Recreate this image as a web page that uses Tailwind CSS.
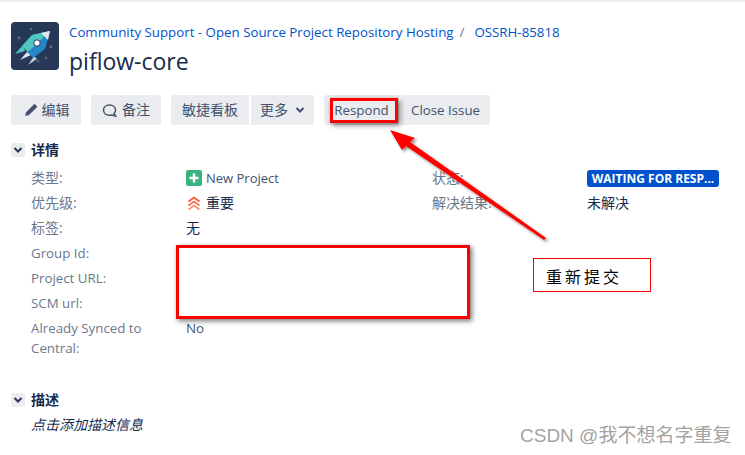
<!DOCTYPE html>
<html>
<head>
<meta charset="utf-8">
<script src="https://cdn.jsdelivr.net/npm/@tailwindcss/browser@4"></script>
</head>
<body class="bg-white">
<div class="relative w-[745px] h-[455px] overflow-hidden bg-white text-[13.3px] leading-[20px] text-[#172b4d] font-['Open_Sans','Noto_Sans_CJK_SC',sans-serif]">
  <div class="h-[2px] bg-[#ebecf0]"></div>

  <header class="flex pl-[11px] pt-[20px] gap-[10px] h-[93px]">
    <svg class="w-[48px] h-[48px] shrink-0" viewBox="0 0 48 48">
      <rect width="48" height="48" rx="4" fill="#253858"/>
      <circle cx="8" cy="16" r="1.4" fill="#5e6c84"/><circle cx="20" cy="7" r="1.2" fill="#5e6c84"/><circle cx="40" cy="25" r="1.4" fill="#5e6c84"/><circle cx="27" cy="39" r="1.3" fill="#5e6c84"/><circle cx="35" cy="36" r="1.3" fill="#5e6c84"/>
      <path d="M12 23 L4 32 L14 29 Z" fill="#4dc5c0"/>
      <path d="M16 30 L9 38 L20 33 Z" fill="#dfe6ee"/>
      <path d="M23 34 L17 43 L26 37 Z" fill="#b9c8da"/>
      <path d="M39 9 L21 13 L11 24 L22 36 L34 27 Z" fill="#2684c8"/>
      <path d="M39 9 L21 13 L11 24 L17 30 Z" fill="#4dc5c0"/>
      <path d="M39 9 L30 11 L37 18 Z" fill="#dfe6ee"/>
      <circle cx="26" cy="21" r="3.2" fill="#fff" stroke="#253858" stroke-width="1"/>
    </svg>
    <div class="min-w-0">
      <div class="flex h-[20px] text-[#0052cc] whitespace-nowrap">
        <span>Community Support - Open Source Project Repository Hosting</span>
        <span class="ml-[6px] text-[#6b778c]">/</span>
        <span class="ml-[10px]">OSSRH-85818</span>
      </div>
      <h1 class="mt-[2px] text-[23px] leading-[34px] font-medium">piflow-core</h1>
    </div>
  </header>

  <div class="flex items-stretch h-[30px] pl-[11px] text-[#42526e]">
    <div class="flex items-center justify-center gap-[3px] w-[70px] rounded-[3px] bg-[#ebecf0] text-[14px]">
      <svg class="w-[16px] h-[16px]" viewBox="0 0 16 16"><path d="M11.5 1.8 L14.4 4.7 L6 13 L2.2 14 L3.1 10.2 Z" fill="#42526e"/></svg>
      <span>编辑</span>
    </div>
    <div class="flex items-center justify-center gap-[5px] w-[70px] ml-[10px] rounded-[3px] bg-[#ebecf0] text-[14px]">
      <svg class="w-[15px] h-[15px]" viewBox="0 0 15 15"><path d="M7.5 2 C11 2 13.5 4.200 13.500 7 C13.500 8.500 13 9.600 12 10.500 L13.500 13 L9.800 12 C9 12.200 8.300 12.300 7.500 12.300 C4 12.300 1.500 10 1.500 7 C1.500 4.200 4 2 7.500 2 Z" fill="none" stroke="#42526e" stroke-width="1.500"/></svg>
      <span>备注</span>
    </div>
    <div class="flex items-center justify-center w-[78px] ml-[10px] rounded-l-[3px] bg-[#ebecf0] text-[14px]">敏捷看板</div>
    <div class="flex items-center justify-center gap-[7px] w-[63px] ml-[2px] rounded-r-[3px] bg-[#ebecf0] text-[14px]">
      <span>更多</span>
      <svg class="w-[10px] h-[8px]" viewBox="0 0 10 8"><path d="M1.500 2 L5 5.500 L8.500 2" fill="none" stroke="#42526e" stroke-width="2"/></svg>
    </div>
    <div class="flex items-center justify-center w-[75px] ml-[10px] rounded-l-[3px] bg-[#ebecf0]">Respond</div>
    <div class="flex items-center justify-center w-[89px] ml-[2px] rounded-r-[3px] bg-[#ebecf0]">Close Issue</div>
  </div>

  <section class="mt-[15px]">
    <div class="flex items-center h-[20px] pl-[11px] gap-[6px]">
      <span class="flex items-center justify-center w-[14px] h-[14px] rounded-[2px] bg-[#ebecf0]">
        <svg class="w-[10px] h-[8px]" viewBox="0 0 10 8"><path d="M1.500 2 L5 5.500 L8.500 2" fill="none" stroke="#253858" stroke-width="2"/></svg>
      </span>
      <h2 class="text-[14px] font-semibold">详情</h2>
    </div>
    <div class="mt-[5px] pl-[31px] grid grid-cols-[155px_246px_155px_1fr] auto-rows-[25px] text-[14px]">
      <div class="pt-[3px] text-[#6b778c]">类型:</div>
      <div class="flex items-center gap-[4px]">
        <svg class="w-[16px] h-[16px]" viewBox="0 0 16 16"><rect width="16" height="16" rx="2" fill="#36b37e"/><path d="M8 3.500 V12.500 M3.500 8 H12.500" stroke="#fff" stroke-width="2.400"/></svg>
        <span class="text-[#42526e] text-[13px]">New Project</span>
      </div>
      <div class="pt-[3px] text-[#6b778c]">状态:</div>
      <div class="pt-[5px]"><div class="w-[132px] h-[17px] rounded-[3px] bg-[#0052cc] text-white text-[12px] leading-[17px] font-bold text-center whitespace-nowrap">WAITING FOR RESP...</div></div>

      <div class="pt-[3px] text-[#6b778c]">优先级:</div>
      <div class="flex items-center gap-[4px]">
        <svg class="w-[16px] h-[16px]" viewBox="0 0 16 16"><path d="M2.500 6.500 L8 2.500 L13.500 6.500" fill="none" stroke="#ff5630" stroke-width="1.800"/><path d="M2.500 10.500 L8 6.500 L13.500 10.500" fill="none" stroke="#ff7452" stroke-width="1.800"/><path d="M2.500 14.500 L8 10.500 L13.500 14.500" fill="none" stroke="#ff8f73" stroke-width="1.800"/></svg>
        <span>重要</span>
      </div>
      <div class="pt-[3px] text-[#6b778c]">解决结果:</div>
      <div class="pt-[3px]">未解决</div>

      <div class="col-start-1 pt-[3px] text-[#6b778c]">标签:</div>
      <div class="pt-[3px]">无</div>
      <div class="col-start-1 pt-[3px] text-[#6b778c] text-[13.3px]">Group Id:</div>
      <div class="col-start-1 pt-[3px] text-[#6b778c] text-[13.3px]">Project URL:</div>
      <div class="col-start-1 pt-[3px] text-[#6b778c] text-[13.3px]">SCM url:</div>
      <div class="col-start-1 row-span-2 pt-[3px] text-[#6b778c] text-[13.3px]">Already Synced to<br>Central:</div>
      <div class="pt-[3px] text-[#42526e] text-[13.3px]">No</div>
    </div>
  </section>

  <section class="mt-[25px]">
    <div class="flex items-center h-[20px] pl-[11px] gap-[6px]">
      <span class="flex items-center justify-center w-[14px] h-[14px] rounded-[2px] bg-[#ebecf0]">
        <svg class="w-[10px] h-[8px]" viewBox="0 0 10 8"><path d="M1.500 2 L5 5.500 L8.500 2" fill="none" stroke="#253858" stroke-width="2"/></svg>
      </span>
      <h2 class="text-[14px] font-semibold">描述</h2>
    </div>
    <p class="mt-[5px] pl-[31px] italic text-[14px]">点击添加描述信息</p>
  </section>

  <!-- annotations drawn over the page -->
  <div class="absolute left-[330px] top-[98px] w-[68px] h-[25px] border-[3px] border-[#f00] shadow-[2px_2px_5px_rgba(0,0,0,0.55)]"></div>
  <div class="absolute left-[176px] top-[245px] w-[294px] h-[74px] border-[3px] border-[#f00] bg-white shadow-[2px_2px_5px_rgba(0,0,0,0.55)]"></div>
  <svg class="absolute left-0 top-0 w-[745px] h-[455px] pointer-events-none" viewBox="0 0 745 455">
    <defs><filter id="s" x="-20%" y="-20%" width="140%" height="140%"><feDropShadow dx="2" dy="2" stdDeviation="1.800" flood-color="#000" flood-opacity="0.45"/></filter></defs>
    <g filter="url(#s)"><path d="M390 130 L415 138 L410 142 L546 238 L544 240 L406 146 L402 150 Z" fill="#f00"/></g>
  </svg>
  <div class="absolute left-[533px] top-[258px] w-[118px] h-[34px] border border-[#f00] bg-white pl-[12px] text-[16px] leading-[34px] tracking-[3px] text-black font-['Noto_Sans_CJK_SC',sans-serif]">重新提交</div>
  <div class="absolute left-[520px] top-[423px] text-[19px] leading-[26px] text-[#a3a3a3] font-['Liberation_Sans','Noto_Sans_CJK_SC',sans-serif] whitespace-nowrap">CSDN @我不想名字重复</div>
</div>
</body>
</html>
